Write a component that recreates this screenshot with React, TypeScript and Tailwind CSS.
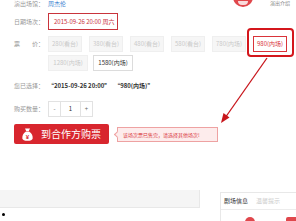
const prices = [
  { label: '280(看台)', state: 'off' },
  { label: '380(看台)', state: 'off' },
  { label: '480(看台)', state: 'off' },
  { label: '580(看台)', state: 'off' },
  { label: '780(内场)', state: 'off' },
  { label: '980(内场)', state: 'on' },
]

const prices2 = [
  { label: '1280(内场)', state: 'off' },
  { label: '1580(内场)', state: 'free' },
]

function PriceBox({ label, state, w }: { label: string; state: string; w: string }) {
  const look =
    state === 'on'
      ? 'border-[#d9343a] text-[#d9343a] bg-white'
      : state === 'free'
        ? 'border-[#dcdcdc] text-[#333] bg-white'
        : 'border-[#efefef] text-[#c9c9c9] bg-[#f6f6f6]'
  return (
    <div className={`${w} h-[16px] border flex items-center justify-center text-[6px] leading-none whitespace-nowrap ${look}`}>
      {label}
    </div>
  )
}

function MoneyBag() {
  return (
    <svg width="11" height="13" viewBox="0 0 11 13">
      <path d="M3 0.5 L8 0.5 L6.8 3 L4.2 3 Z" fill="#fff" />
      <path d="M4 3.4 L7 3.4 C10 5 11 8 10.6 10.5 C10.3 12.3 8.6 12.8 5.5 12.8 C2.4 12.8 0.7 12.3 0.4 10.5 C0 8 1 5 4 3.4 Z" fill="#fff" />
      <text x="5.5" y="10.8" textAnchor="middle" fontSize="6" fontWeight="bold" fill="#d8262e" fontFamily="'Liberation Sans', sans-serif">¥</text>
    </svg>
  )
}

export default function App() {
  return (
    <div className="relative w-[296px] h-[221px] overflow-hidden bg-white font-['Noto_Sans_CJK_SC','Noto_Sans',sans-serif] text-[6px] leading-none text-[#999]">
      <div className="pl-[14px]">
        {/* venue */}
        <div className="flex items-center h-[8px] leading-[8px]">
          <span className="w-[34px] whitespace-nowrap">演出场馆：</span>
          <span className="text-[#3b7fd0]">周杰伦</span>
        </div>

        {/* date */}
        <div className="flex items-center mt-[5px]">
          <span className="w-[34px] whitespace-nowrap">日期场次：</span>
          <div className="w-[70px] h-[17px] border border-[#c9343c] flex items-center pl-[5px] text-[#c9343c] whitespace-nowrap">
            2015-09-26 20:00 周六
          </div>
        </div>

        {/* prices */}
        <div className="flex mt-[6px]">
          <span className="w-[34px] pt-[5px] whitespace-nowrap">票　　价：</span>
          <div className="flex flex-col gap-[3px]">
            <div className="flex gap-[7px]">
              {prices.map((p) => (
                <PriceBox key={p.label} label={p.label} state={p.state} w="w-[34px]" />
              ))}
            </div>
            <div className="flex gap-[5px]">
              {prices2.map((p) => (
                <PriceBox key={p.label} label={p.label} state={p.state} w="w-[40px]" />
              ))}
            </div>
          </div>
        </div>

        {/* chosen */}
        <div className="flex items-center mt-[12px]">
          <span className="w-[34px] whitespace-nowrap">您已选择：</span>
          <span className="font-bold text-[#333]">“2015-09-26 20:00”</span>
          <span className="font-bold text-[#333] ml-[4px]">“980(内场)”</span>
        </div>

        {/* quantity */}
        <div className="flex items-center mt-[12px]">
          <span className="w-[34px] whitespace-nowrap">购买数量：</span>
          <div className="w-[45px] h-[16px] border border-[#e2e2e2] flex items-center text-[#666]">
            <span className="w-[11px] text-center">-</span>
            <span className="flex-1 h-full border-x border-[#e2e2e2] flex items-center justify-center text-[#333]">1</span>
            <span className="w-[11px] text-center">+</span>
          </div>
        </div>

        {/* buy button + tip */}
        <div className="flex items-center mt-[7px]">
          <div className="w-[95px] h-[20px] bg-[#d8262e] rounded-[2px] flex items-center pl-[8px] gap-[8px]">
            <MoneyBag />
            <span className="text-white text-[10px] whitespace-nowrap">到合作方购票</span>
          </div>
          <div className="relative ml-[8px] w-[101px] h-[15px] bg-[#fdecec] border border-[#eea2a2] flex items-center pl-[5px] text-[#d9343a] text-[5px] whitespace-nowrap">
            <span className="absolute left-[-3px] top-[4px] w-[5px] h-[5px] rotate-45 bg-[#fdecec] border-l border-b border-[#eea2a2]" />
            该场次票已售完，请选择其他场次!
          </div>
        </div>
      </div>

      {/* lower panels */}
      <div className="flex mt-[46px]">
        <div className="w-[200px] h-[18px] bg-[#f5f5f5] border-b border-r border-[#e8e8e8]" />
        <div className="ml-[20px] flex-1 h-[30px] border-l border-t border-[#e8e8e8] mt-[2px]">
          <div className="h-[17px] border-b border-[#ececec] flex items-center pl-[3px] gap-[8px]">
            <span className="text-[#333] text-[6px]">剧场信息</span>
            <span className="text-[#ccc] text-[6px]">温馨提示</span>
          </div>
        </div>
      </div>

      {/* overlays */}
      <div className="absolute left-[2px] top-[213px] w-[3px] h-[3px] rounded-full bg-black" />
      <div className="absolute left-[233px] top-[-13px] w-[20px] h-[20px] rounded-full bg-[#e0474c] flex items-end justify-center pb-[2px]">
        <div className="w-[10px] h-[4px] rounded-b-full bg-white/80" />
      </div>
      <span className="absolute left-[270px] top-0 text-[#888] text-[5px]">演出介绍</span>
      <div className="absolute left-[245px] top-[217px] w-[10px] h-[10px] rounded-full bg-[#e0474c]" />
      <div className="absolute left-[286px] top-[217px] w-[14px] h-[10px] rounded-[2px] bg-[#e0474c]" />

      {/* annotation */}
      <div className="absolute left-[247px] top-[28px] w-[47px] h-[29px] border-2 border-[#d4161c] rounded-[4px]" />
      <svg className="absolute left-0 top-0" width="296" height="221">
        <line x1="267" y1="58" x2="225" y2="118" stroke="#c8161c" strokeWidth="1.3" />
        <path d="M221 123 L223.5 113 L229.5 117.5 Z" fill="#c8161c" />
      </svg>
    </div>
  )
}
